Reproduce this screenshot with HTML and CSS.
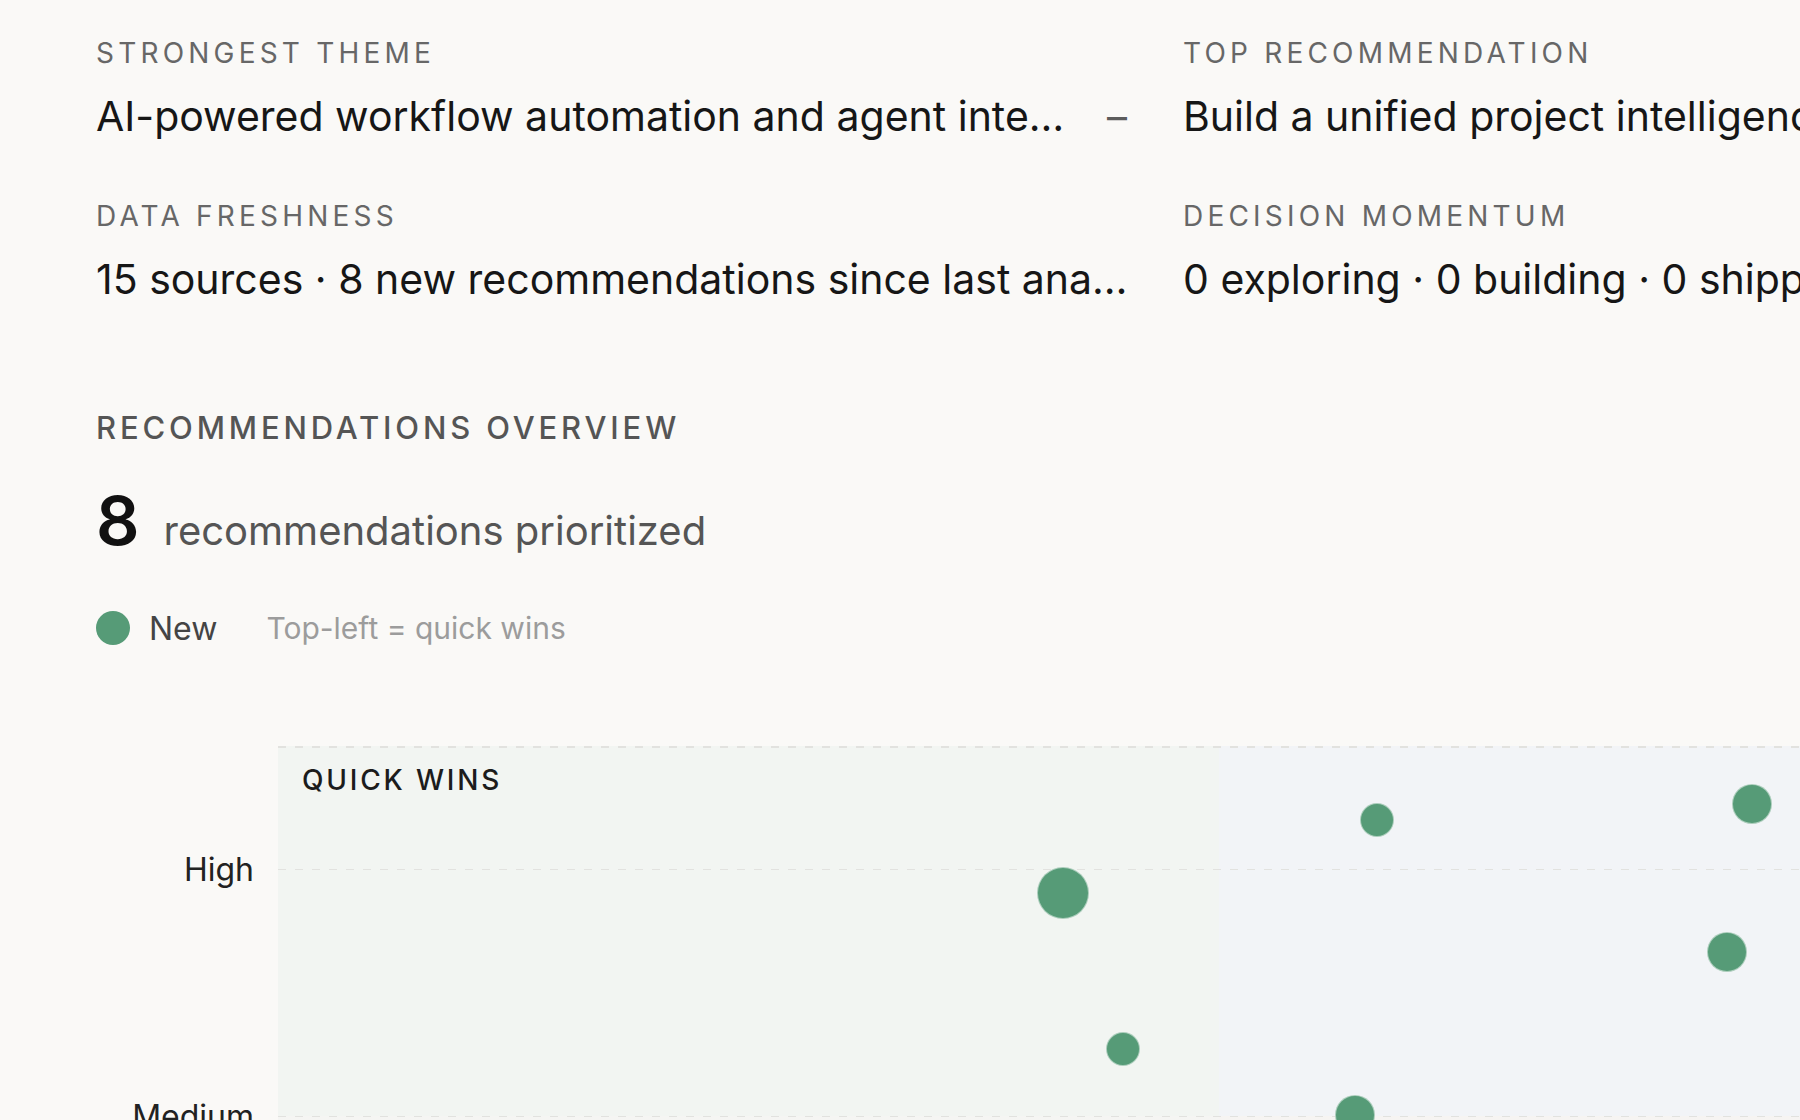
FILE: index.html
```html
<!DOCTYPE html>
<html lang="en">
<head>
<meta charset="utf-8">
<title>Recommendations overview</title>
<link rel="stylesheet" href="styles.css">
</head>
<body>
<div class="page">
  <section class="summary">
    <div class="stat">
      <div class="stat-label">Strongest theme</div>
      <div class="stat-row">
        <span class="stat-value">AI-powered workflow automation and agent integrations</span>
        <span class="trend">–</span>
      </div>
    </div>
    <div class="stat">
      <div class="stat-label">Top recommendation</div>
      <div class="stat-row">
        <span class="stat-value">Build a unified project intelligence layer across sources</span>
      </div>
    </div>
    <div class="stat">
      <div class="stat-label">Data freshness</div>
      <div class="stat-row">
        <span class="stat-value">15 sources · 8 new recommendations since last analysis</span>
      </div>
    </div>
    <div class="stat">
      <div class="stat-label">Decision momentum</div>
      <div class="stat-row">
        <span class="stat-value">0 exploring · 0 building · 0 shipped</span>
      </div>
    </div>
  </section>

  <section class="overview">
    <h2 class="section-title">Recommendations overview</h2>
    <div class="count-row">
      <span class="count">8</span>
      <span class="count-text">recommendations prioritized</span>
    </div>
    <div class="legend">
      <span class="legend-item"><span class="legend-dot"></span>New</span>
      <span class="legend-hint">Top-left = quick wins</span>
    </div>

    <div class="chart">
      <div class="y-axis">
        <span class="y-label">High</span>
        <span class="y-label">Medium</span>
        <span class="y-label">Low</span>
      </div>
      <div class="plot">
        <div class="quadrant q-tl"><span class="quadrant-label">Quick wins</span></div>
        <div class="quadrant q-tr"></div>
        <div class="quadrant q-bl"></div>
        <div class="quadrant q-br"></div>
        <div class="grid-lines">
          <div class="grid-band first"></div>
          <div class="grid-band"></div>
          <div class="grid-band"></div>
          <div class="grid-band"></div>
        </div>
        <div class="dots">
          <span class="dot" style="left:785px;top:147px;width:52px;height:52px"></span>
          <span class="dot" style="left:1099px;top:74px;width:34px;height:34px"></span>
          <span class="dot" style="left:1474px;top:58px;width:40px;height:40px"></span>
          <span class="dot" style="left:1449px;top:206px;width:40px;height:40px"></span>
          <span class="dot" style="left:845px;top:303px;width:34px;height:34px"></span>
          <span class="dot" style="left:1077px;top:369px;width:40px;height:40px"></span>
          <span class="dot" style="left:620px;top:470px;width:34px;height:34px"></span>
          <span class="dot" style="left:1320px;top:560px;width:40px;height:40px"></span>
        </div>
      </div>
    </div>
  </section>
</div>
</body>
</html>
```

FILE: styles.css
```css
html, body {
  margin: 0;
  background: #faf9f7;
  overflow: hidden;
}

body {
  font-family: Inter, "Noto Sans", "Liberation Sans", sans-serif;
  color: #161616;
}

.page {
  width: 2314px;
  box-sizing: border-box;
  padding: 39px 96px 0;
}

/* ---------- summary stats ---------- */
.summary {
  display: grid;
  grid-template-columns: 1035px 1035px;
  column-gap: 52px;
  row-gap: 61px;
}

.stat-label {
  font-size: 28px;
  line-height: 28px;
  letter-spacing: 0.15em;
  text-transform: uppercase;
  color: #676767;
  margin-bottom: 25px;
}

.stat-row {
  display: flex;
  align-items: baseline;
}

.stat-value {
  flex: 1;
  min-width: 0;
  font-size: 41px;
  line-height: 48px;
  white-space: nowrap;
  overflow: hidden;
  text-overflow: ellipsis;
  color: #161616;
}

.trend {
  flex: none;
  margin-left: 40px;
  margin-right: 4px;
  font-size: 40px;
  line-height: 48px;
  color: #5c5c5c;
}

/* ---------- overview ---------- */
.overview {
  margin-top: 107px;
}

.section-title {
  margin: 0;
  font-size: 31px;
  line-height: 36px;
  font-weight: 500;
  letter-spacing: 0.124em;
  text-transform: uppercase;
  color: #555;
}

.count-row {
  display: flex;
  align-items: baseline;
  gap: 24px;
  margin-top: 40px;
}

.count {
  font-size: 68px;
  line-height: 68px;
  font-weight: 600;
  color: #111;
}

.count-text {
  font-size: 40px;
  color: #555;
}

.legend {
  display: flex;
  align-items: center;
  height: 36px;
  margin-top: 55px;
  font-size: 30px;
}

.legend-item {
  display: flex;
  align-items: center;
  gap: 19px;
  font-size: 32px;
  color: #444;
}

.legend-dot {
  width: 34px;
  height: 34px;
  border-radius: 50%;
  background: #569b77;
}

.legend-hint {
  margin-left: 49px;
  color: #9c9c9c;
}

/* ---------- chart ---------- */
.chart {
  display: grid;
  grid-template-columns: 182px 1882px;
  margin-top: 100px;
}

.y-axis {
  display: flex;
  flex-direction: column;
  height: 740px;
  padding-right: 24px;
}

.y-label {
  flex: 1;
  display: flex;
  align-items: center;
  justify-content: flex-end;
  font-size: 32px;
  color: #222;
}

.plot {
  position: relative;
  height: 740px;
  display: grid;
  grid-template-columns: 941px 941px;
  grid-template-rows: 1fr 1fr;
}

.quadrant {
  padding: 20px 24px;
}

.q-tl { background: #f2f5f2; }
.q-tr { background: #f2f4f7; }
.q-bl { background: #f5f5f3; }
.q-br { background: #f6f4f2; }

.quadrant-label {
  display: block;
  font-size: 28px;
  line-height: 28px;
  font-weight: 500;
  letter-spacing: 0.1em;
  text-transform: uppercase;
  color: #1c1c1c;
}

.grid-lines {
  position: absolute;
  inset: 0;
  display: grid;
  grid-template-rows: 1fr 2fr 2fr 1fr;
  pointer-events: none;
}

.grid-band {
  background-image: repeating-linear-gradient(90deg, #e2e2df 0 8px, transparent 8px 17px);
  background-size: 100% 2px;
  background-repeat: no-repeat;
  background-position: 0 -1px;
}

.grid-band.first {
  background-position: 0 0;
}

.dots {
  position: absolute;
  inset: 0;
}

.dot {
  position: absolute;
  transform: translate(-50%, -50%);
  box-sizing: border-box;
  border-radius: 50%;
  background: #569b77;
  border: 1px solid rgba(255, 255, 255, 0.5);
}
```
